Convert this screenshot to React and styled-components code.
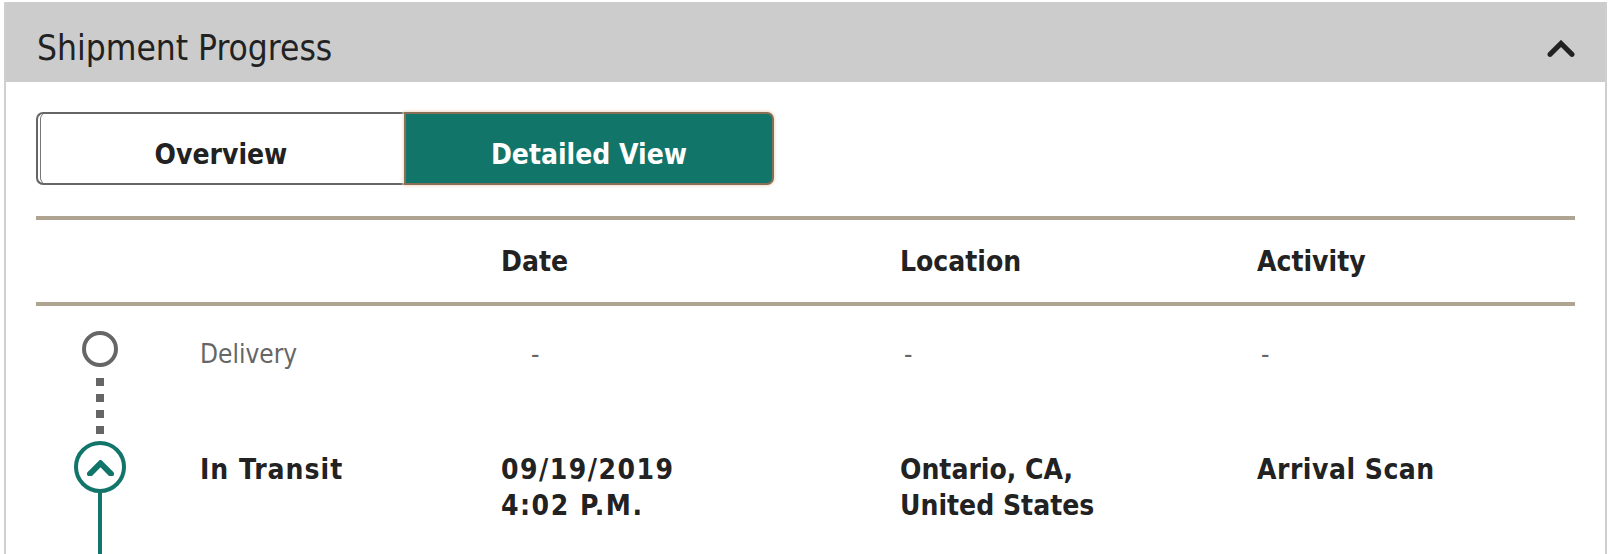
import styled, { createGlobalStyle } from "styled-components";

const GlobalStyle = createGlobalStyle`
  html, body {
    margin: 0;
    background: #fff;
  }
  body {
    font-family: "DejaVu Sans Condensed", "DejaVu Sans", Tahoma, sans-serif;
    color: #222;
  }
`;

const teal = "#12756a";
const rule = "#afa392";

const cols = "164px 301px 399px 357px 1fr";

const Panel = styled.section`
  margin: 2px 3px 0 4px;
  height: 552px;
  border-left: 2px solid #cfcfcf;
  border-right: 2px solid #cfcfcf;
  overflow: hidden;
  box-sizing: border-box;
`;

const Header = styled.header`
  display: flex;
  justify-content: space-between;
  align-items: flex-start;
  height: 80px;
  margin: 0 -2px;
  padding: 26px 32px 0 33px;
  box-sizing: border-box;
  background: #cccccc;

  h2 {
    margin: 0;
    font-size: 35px;
    line-height: 40px;
    font-weight: normal;
    color: #222;
  }
`;

const Collapse = styled.button`
  margin-top: 12px;
  padding: 0;
  border: none;
  background: none;
  line-height: 0;
  cursor: pointer;
`;

const Body = styled.div`
  padding: 30px 30px 0;
`;

const Toggle = styled.div`
  display: flex;
  width: 738px;
  height: 73px;
`;

const ToggleButton = styled.button`
  flex: 1;
  height: 100%;
  box-sizing: border-box;
  padding: 23px 0 0;
  display: flex;
  justify-content: center;
  align-items: flex-start;
  font-family: inherit;
  font-size: 28px;
  line-height: 36px;
  font-weight: bold;
  cursor: pointer;
  color: ${(p) => (p.$active ? "#fff" : "#222")};
  background: ${(p) => (p.$active ? teal : "#fff")};
  border: 2px solid ${(p) => (p.$active ? "#8a6e55" : "#666")};
  border-radius: ${(p) => (p.$active ? "0 7px 7px 0" : "7px 0 0 7px")};
  border-right-width: ${(p) => (p.$active ? "2px" : "0")};
  box-shadow: ${(p) =>
    p.$active
      ? "0 0 3px 1px #f1dcc8"
      : "inset 3px 0 0 -1px #fff, inset 4px 0 0 -1px #777"};
`;

const Table = styled.div`
  margin-top: 31px;
  border-top: 4px solid ${rule};
`;

const HeadRow = styled.div`
  display: grid;
  grid-template-columns: ${cols};
  align-items: center;
  height: 82px;
  border-bottom: 4px solid ${rule};
  font-size: 28px;
  font-weight: bold;
  color: #222;
`;

const Row = styled.div`
  display: grid;
  grid-template-columns: ${cols};
  align-items: stretch;
  min-height: ${(p) => p.$minHeight}px;
`;

const Track = styled.div`
  display: flex;
  flex-direction: column;
  align-items: center;
  width: 128px;
  padding-top: ${(p) => p.$top}px;
  box-sizing: border-box;
`;

const Dot = styled.div`
  width: 36px;
  height: 36px;
  box-sizing: border-box;
  border: 4px solid #666;
  border-radius: 50%;
  flex-shrink: 0;
`;

const Dotted = styled.div`
  flex: 1;
  width: 8px;
  margin-top: 11px;
  background: repeating-linear-gradient(
    to bottom,
    #666 0 8px,
    transparent 8px 16px
  );
`;

const Current = styled.div`
  width: 52px;
  height: 52px;
  box-sizing: border-box;
  border: 4px solid ${teal};
  border-radius: 50%;
  display: flex;
  align-items: center;
  justify-content: center;
  flex-shrink: 0;
  padding-top: 2px;
`;

const Solid = styled.div`
  flex: 1;
  width: 4px;
  background: ${teal};
`;

const Cell = styled.div`
  padding-top: ${(p) => p.$top}px;
  padding-left: ${(p) => p.$indent || 0}px;
  font-size: ${(p) => (p.$muted ? 26 : 28)}px;
  line-height: 36px;
  font-weight: ${(p) => (p.$muted ? "normal" : "bold")};
  color: ${(p) => (p.$muted ? "#666" : "#222")};
  letter-spacing: ${(p) => p.$spacing || 0}px;
`;

const Chevron = ({ size = 28, color = "#222", stroke = 4.5 }) => (
  <svg width={size} height={size * 0.62} viewBox="0 0 28 17.4" fill="none">
    <polyline
      points="3,14.4 14,3.4 25,14.4"
      stroke={color}
      strokeWidth={stroke}
      strokeLinecap="round"
      strokeLinejoin="miter"
    />
  </svg>
);

const events = [
  {
    status: "Delivery",
    pending: true,
    date: "-",
    location: "-",
    activity: "-",
  },
  {
    status: "In Transit",
    date: ["09/19/2019", "4:02 P.M."],
    location: ["Ontario, CA,", "United States"],
    activity: "Arrival Scan",
  },
];

const lines = (v) =>
  Array.isArray(v) ? v.map((l, i) => <div key={i}>{l}</div>) : v;

export default function App() {
  return (
    <>
      <GlobalStyle />
      <Panel>
        <Header>
          <h2>Shipment Progress</h2>
          <Collapse aria-label="Collapse">
            <Chevron stroke={5} />
          </Collapse>
        </Header>
        <Body>
          <Toggle>
            <ToggleButton>Overview</ToggleButton>
            <ToggleButton $active>Detailed View</ToggleButton>
          </Toggle>
          <Table>
            <HeadRow>
              <span />
              <span />
              <span>Date</span>
              <span>Location</span>
              <span>Activity</span>
            </HeadRow>
            {events.map((e) =>
              e.pending ? (
                <Row key={e.status} $minHeight={135}>
                  <Track $top={25}>
                    <Dot />
                    <Dotted />
                  </Track>
                  <Cell $top={30} $muted>
                    {e.status}
                  </Cell>
                  <Cell $top={30} $muted $indent={30}>
                    {e.date}
                  </Cell>
                  <Cell $top={30} $muted $indent={4}>
                    {e.location}
                  </Cell>
                  <Cell $top={30} $muted $indent={4}>
                    {e.activity}
                  </Cell>
                </Row>
              ) : (
                <Row key={e.status} $minHeight={160}>
                  <Track $top={0}>
                    <Current>
                      <Chevron size={27} color={teal} stroke={6} />
                    </Current>
                    <Solid />
                  </Track>
                  <Cell $top={11} $spacing={1}>
                    {e.status}
                  </Cell>
                  <Cell $top={11} $spacing={1.5}>
                    {lines(e.date)}
                  </Cell>
                  <Cell $top={11}>{lines(e.location)}</Cell>
                  <Cell $top={11} $spacing={0.5}>
                    {e.activity}
                  </Cell>
                </Row>
              )
            )}
          </Table>
        </Body>
      </Panel>
    </>
  );
}
